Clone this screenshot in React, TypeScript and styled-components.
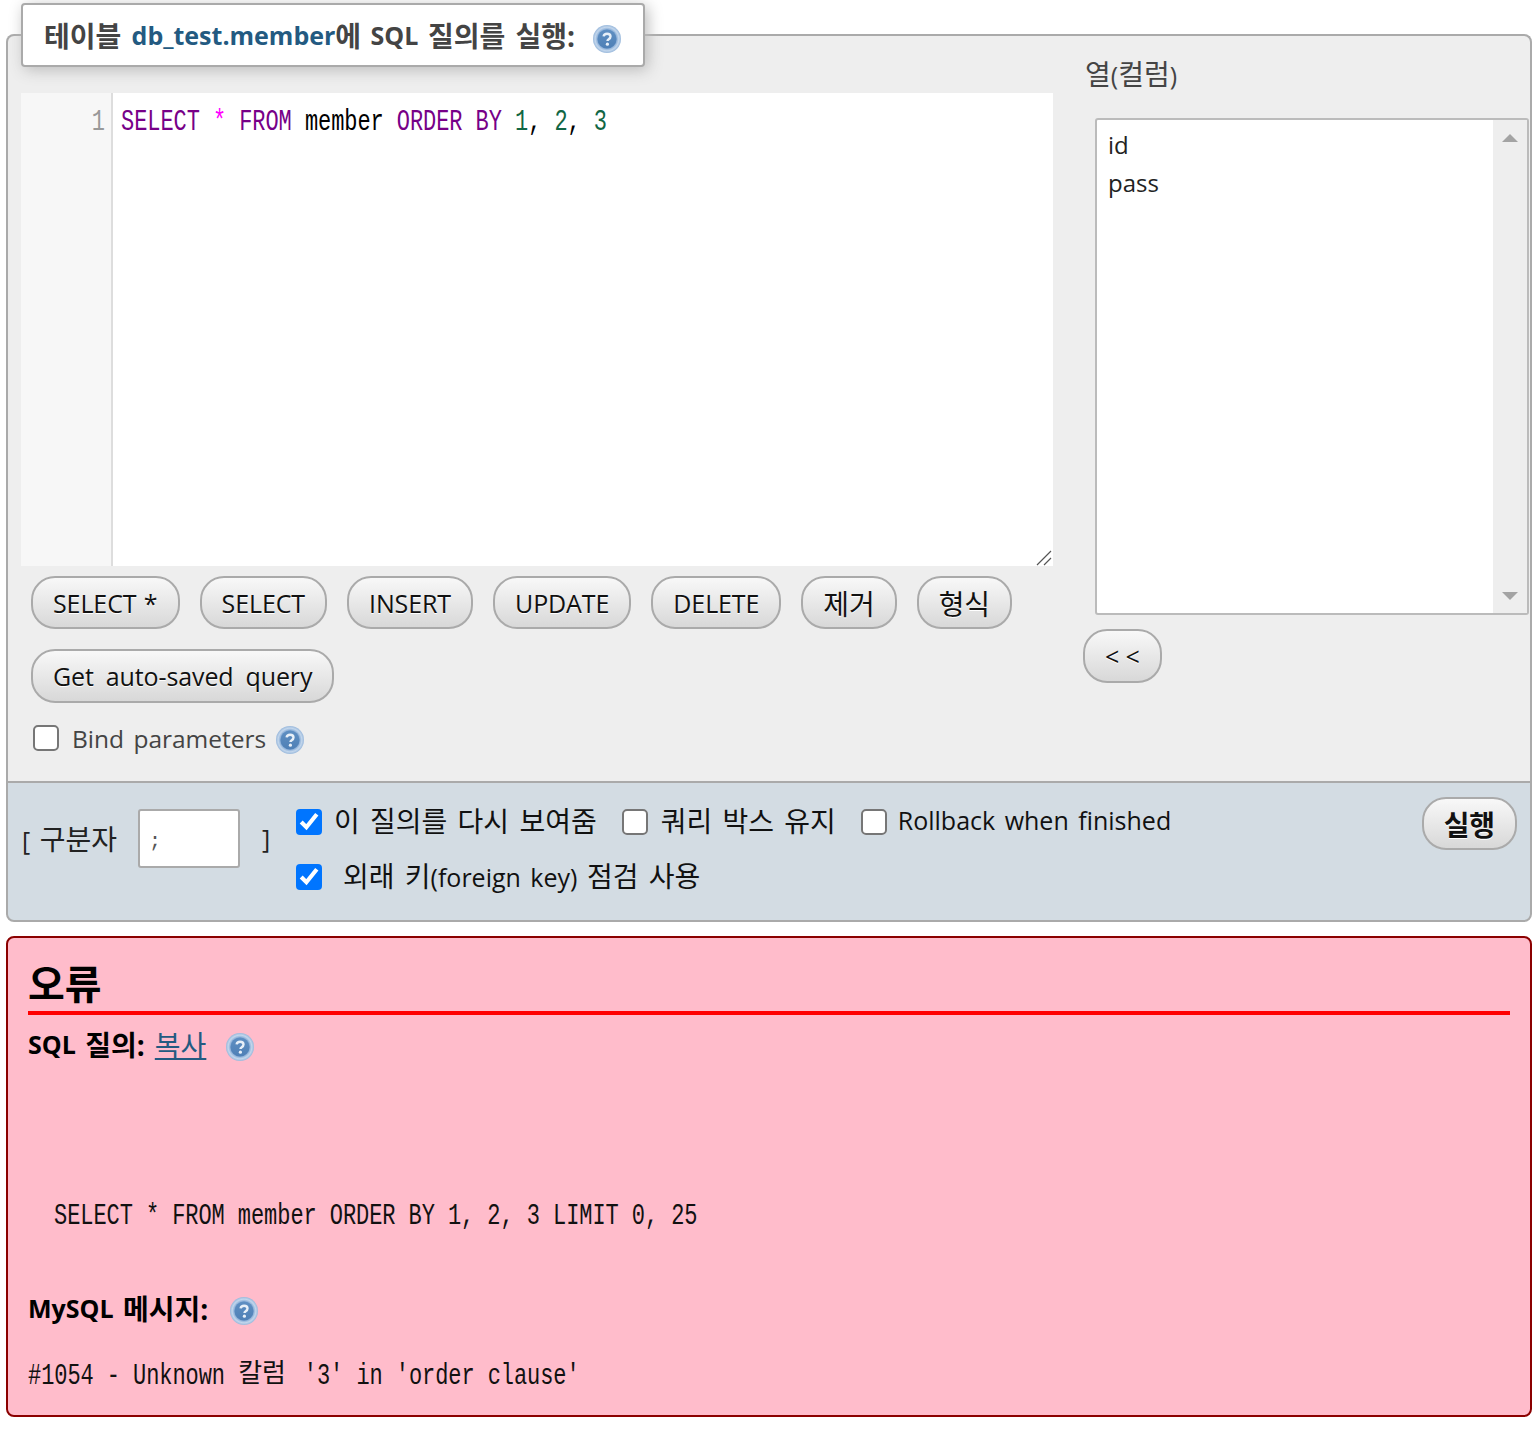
import React from "react";
import styled, { createGlobalStyle } from "styled-components";

const sans = `"Open Sans", "Noto Sans CJK KR", sans-serif`;
const mono = `"Liberation Mono", "Noto Sans CJK KR", monospace`;

const GlobalStyle = createGlobalStyle`
  html, body {
    margin: 0;
    padding: 0;
    background: #fff;
  }
  body {
    font-family: ${sans};
    font-size: 25px;
    word-spacing: 3px;
    color: #444;
  }
`;

// hangul runs sit a little larger than the latin text around them
const Ko = styled.span`
  font-size: 28px;
  word-spacing: 3px;
`;

const Page = styled.div`
  width: 1536px;
  height: 1438px;
  box-sizing: border-box;
  padding: 3px 4px 0 6px;
  overflow: hidden;
`;

const QueryFieldset = styled.fieldset`
  margin: 0;
  padding: 0 1px 0 13px;
  height: 778px;
  box-sizing: border-box;
  min-width: 0;
  background: #eee;
  border: 2px solid #aaa;
  border-bottom: 0;
  border-radius: 8px 8px 0 0;
`;

const Legend = styled.legend`
  box-sizing: border-box;
  width: 624px;
  height: 64px;
  padding: 0 0 0 21px;
  display: flex;
  align-items: center;
  background: #fff;
  border: 2px solid #aaa;
  border-radius: 4px;
  box-shadow: 3px 3px 15px #bbb;
  font-weight: 700;
  color: #444;
  white-space: pre;
`;

const TableName = styled.span`
  color: #235a81;
`;

const LegendHelp = styled.span`
  margin: 7px 0 0 18px;
  display: flex;
`;

const Columns = styled.div`
  display: flex;
  gap: 30px;
`;

const LeftColumn = styled.div`
  width: 1032px;
  flex: none;
  padding-top: 26px;
`;

const Editor = styled.div`
  position: relative;
  height: 473px;
  display: flex;
  background: #fff;
`;

const Gutter = styled.div`
  width: 92px;
  flex: none;
  box-sizing: border-box;
  padding: 15px 6px 0 0;
  text-align: right;
  background: #f7f7f7;
  border-right: 2px solid #ddd;
  color: #999;
  font-family: ${mono};
  font-size: 22px;
  line-height: 30px;
  word-spacing: 0;
`;

const CodeLine = styled.div`
  padding: 15px 0 0 8px;
  font-family: ${mono};
  font-size: 22px;
  line-height: 30px;
  letter-spacing: -0.07px;
  word-spacing: 0;
  color: #000;
  white-space: pre;
`;

const Tall = styled.span`
  display: inline-block;
  transform: scaleY(1.3);
`;

const TallKo = styled.span`
  display: inline-block;
  width: 52.6px;
  font-size: 26px;
  line-height: 30px;
  transform: scaleY(0.77);
`;

const Keyword = styled.span`
  color: #708;
`;

const Star = styled.span`
  color: #f0f;
`;

const Num = styled.span`
  color: #164;
`;

const ResizeHandle = styled.svg`
  position: absolute;
  right: 0;
  bottom: 0;
`;

const ButtonRow = styled.div<{ $top: number }>`
  display: flex;
  gap: 20px;
  padding: ${(p) => p.$top}px 0 0 10px;
`;

const Button = styled.button<{ $wide?: boolean; $bold?: boolean; $spacing?: number }>`
  box-sizing: border-box;
  height: ${(p) => (p.$wide ? 54 : 53)}px;
  padding: 0 20px;
  font-family: ${sans};
  font-size: 25px;
  letter-spacing: -0.1px;
  word-spacing: ${(p) => p.$spacing ?? 3}px;
  font-weight: ${(p) => (p.$bold ? 700 : 400)};
  color: #111;
  background: linear-gradient(#f8f8f8, #d8d8d8);
  border: 2px solid #aaa;
  border-radius: 24px;
  text-shadow: 0 1px 0 #fff;
  white-space: pre;
`;

const BindRow = styled.div`
  display: flex;
  align-items: center;
  padding: 21px 0 0 12px;
  height: 28px;
`;

const Box = styled.input.attrs({ type: "checkbox" })`
  zoom: 2;
  margin: 0;
  flex: none;
`;

const BindLabel = styled.span`
  margin: 0 10px 0 13px;
  font-size: 24.5px;
  color: #444;
`;

const BindHelp = styled.span`
  margin-top: 4px;
  display: flex;
`;

const RightColumn = styled.div`
  flex: 1;
  margin-top: -11px;
  min-width: 0;
`;

const ColumnLabel = styled.div`
  height: 36px;
  line-height: 36px;
  padding-left: 2px;
  color: #444;
`;

const ColumnList = styled.div`
  box-sizing: border-box;
  height: 497px;
  margin: 26px 0 14px 12px;
  display: flex;
  background: #fff;
  border: 2px solid #bbb;
  border-radius: 3px;
`;

const ColumnItems = styled.div`
  flex: 1;
  padding: 6px 11px;
  color: #222;
  font-size: 24px;
  line-height: 38px;
`;

const ScrollTrack = styled.div`
  width: 34px;
  flex: none;
  box-sizing: border-box;
  padding: 14px 0 13px;
  display: flex;
  flex-direction: column;
  justify-content: space-between;
  align-items: center;
  background: #eee;
`;

const Arrow = styled.div<{ $down?: boolean }>`
  width: 0;
  height: 0;
  border-left: 8px solid transparent;
  border-right: 8px solid transparent;
  ${(p) => (p.$down ? "border-top: 8px solid #a3a3a3;" : "border-bottom: 8px solid #a3a3a3;")}
`;

const FooterBar = styled.div`
  box-sizing: border-box;
  height: 141px;
  display: flex;
  background: #d3dce3;
  border: 2px solid #aaa;
  border-radius: 0 0 8px 8px;
  padding: 14px 13px 0 14px;
`;

const Delimiter = styled.div`
  display: flex;
  align-items: center;
  height: 60px;
  width: 274px;
  margin-top: 11px;
  flex: none;
  color: #222;
  white-space: pre;
`;

const DelimiterInput = styled.div`
  box-sizing: border-box;
  width: 102px;
  height: 59px;
  margin: 0 22px 0 21px;
  padding: 19px 9px 0;
  background: #fff;
  border: 2px solid #aaa;
  border-radius: 3px;
  font-family: ${mono};
  font-size: 20px;
  color: #555;
`;

const Options = styled.div`
  flex: 1;
  display: flex;
  flex-direction: column;
  gap: 25px;
  padding-top: 8px;
`;

const OptionRow = styled.div`
  display: flex;
  align-items: center;
  height: 30px;
`;

const Option = styled.label<{ $gap?: number }>`
  display: flex;
  align-items: center;
  margin-right: 25px;
  color: #111;
  white-space: pre;
  > input {
    margin-top: 2px;
  }
  > span {
    margin-left: ${(p) => p.$gap ?? 13}px;
  }
`;

const ErrorBox = styled.div`
  box-sizing: border-box;
  height: 481px;
  margin-top: 14px;
  padding: 0 20px;
  background: #ffbccb;
  border: 2px solid #8b0000;
  border-radius: 8px;
  color: #000;
`;

const ErrorTitle = styled.h1`
  margin: 0;
  height: 77px;
  box-sizing: border-box;
  padding-top: 18px;
  border-bottom: 4px solid #f00;
  font-size: 40px;
  line-height: 56px;
  font-weight: 700;
`;

const SubHeading = styled.div<{ $top: number }>`
  display: flex;
  align-items: center;
  height: 38px;
  margin-top: ${(p) => p.$top}px;
  font-weight: 700;
  white-space: pre;
`;

const CopyLink = styled.a`
  margin-left: 10px;
  font-weight: 400;
  color: #235a81;
  text-decoration: underline;
`;

const HeadingHelp = styled.span<{ $left: number }>`
  margin: 6px 0 0 ${(p) => p.$left}px;
  display: flex;
`;

const ErrorCode = styled.div<{ $top: number; $left: number }>`
  margin-top: ${(p) => p.$top}px;
  padding-left: ${(p) => p.$left}px;
  font-family: ${mono};
  font-size: 22px;
  line-height: 30px;
  letter-spacing: -0.07px;
  word-spacing: 0;
  color: #111;
  white-space: pre;
`;

const HelpIcon = ({ size = 28 }: { size?: number }) => (
  <svg width={size} height={size} viewBox="0 0 28 28">
    <defs>
      <radialGradient id="helpRing" cx="50%" cy="50%" r="50%">
        <stop offset="66%" stopColor="#7fa6d3" />
        <stop offset="84%" stopColor="#c2d6ec" />
        <stop offset="100%" stopColor="#9ab9dc" />
      </radialGradient>
      <linearGradient id="helpCore" x1="0" y1="0" x2="0" y2="1">
        <stop offset="0%" stopColor="#5f8fc2" />
        <stop offset="100%" stopColor="#4f80b6" />
      </linearGradient>
    </defs>
    <circle cx="14" cy="14" r="14" fill="url(#helpRing)" />
    <circle cx="14" cy="14" r="9.5" fill="url(#helpCore)" />
    <path
      d="M10.6 11.4c.3-1.8 1.6-2.7 3.5-2.7 2 0 3.4 1.1 3.4 2.8 0 1.3-.7 2-1.8 2.7-.9.6-1.2 1-1.2 1.9"
      fill="none"
      stroke="#e8f0f8"
      strokeWidth="2.4"
    />
    <circle cx="14.4" cy="19.2" r="1.6" fill="#e8f0f8" />
  </svg>
);

const App = () => (
  <Page>
    <GlobalStyle />
    <QueryFieldset>
      <Legend>
        <Ko>테이블 </Ko>
        <TableName>db_test.member</TableName>
        <Ko>에</Ko> SQL <Ko>질의를 실행:</Ko>
        <LegendHelp>
          <HelpIcon />
        </LegendHelp>
      </Legend>
      <Columns>
        <LeftColumn>
          <Editor>
            <Gutter>
              <Tall>1</Tall>
            </Gutter>
            <CodeLine>
              <Tall>
                <Keyword>SELECT</Keyword> <Star>*</Star> <Keyword>FROM</Keyword> member{" "}
                <Keyword>ORDER BY</Keyword> <Num>1</Num>, <Num>2</Num>, <Num>3</Num>
              </Tall>
            </CodeLine>
            <ResizeHandle width="18" height="18" viewBox="0 0 18 18">
              <path d="M2 17L16 3M9 17L16 10" stroke="#555" strokeWidth="1.2" />
            </ResizeHandle>
          </Editor>
          <ButtonRow $top={10}>
            <Button $spacing={1}>SELECT *</Button>
            <Button>SELECT</Button>
            <Button>INSERT</Button>
            <Button>UPDATE</Button>
            <Button>DELETE</Button>
            <Button>
              <Ko>제거</Ko>
            </Button>
            <Button>
              <Ko>형식</Ko>
            </Button>
          </ButtonRow>
          <ButtonRow $top={20}>
            <Button $wide $spacing={5.5}>
              Get auto-saved query
            </Button>
          </ButtonRow>
          <BindRow>
            <Box />
            <BindLabel>Bind parameters</BindLabel>
            <BindHelp>
              <HelpIcon />
            </BindHelp>
          </BindRow>
        </LeftColumn>
        <RightColumn>
          <ColumnLabel>
            <Ko>열</Ko>(<Ko>컬럼</Ko>)
          </ColumnLabel>
          <ColumnList>
            <ColumnItems>
              id
              <br />
              pass
            </ColumnItems>
            <ScrollTrack>
              <Arrow />
              <Arrow $down />
            </ScrollTrack>
          </ColumnList>
          <Button $wide $spacing={0}>
            {"< <"}
          </Button>
        </RightColumn>
      </Columns>
    </QueryFieldset>
    <FooterBar>
      <Delimiter>
        <span>
          [ <Ko>구분자</Ko>
        </span>
        <DelimiterInput>;</DelimiterInput>]
      </Delimiter>
      <Options>
        <OptionRow>
          <Option $gap={12}>
            <Box defaultChecked />
            <span>
              <Ko>이 질의를 다시 보여줌</Ko>
            </span>
          </Option>
          <Option>
            <Box />
            <span>
              <Ko>쿼리 박스 유지</Ko>
            </span>
          </Option>
          <Option $gap={11}>
            <Box />
            <span>Rollback when finished</span>
          </Option>
        </OptionRow>
        <OptionRow>
          <Option $gap={21}>
            <Box defaultChecked />
            <span>
              <Ko>외래 키</Ko>(foreign key) <Ko>점검 사용</Ko>
            </span>
          </Option>
        </OptionRow>
      </Options>
      <Button $bold>
        <Ko>실행</Ko>
      </Button>
    </FooterBar>
    <ErrorBox>
      <ErrorTitle>오류</ErrorTitle>
      <SubHeading $top={10}>
        SQL <Ko>질의:</Ko>
        <CopyLink>
          <Ko>복사</Ko>
        </CopyLink>
        <HeadingHelp $left={20}>
          <HelpIcon />
        </HeadingHelp>
      </SubHeading>
      <ErrorCode $top={139} $left={26}>
        <Tall>SELECT * FROM member ORDER BY 1, 2, 3 LIMIT 0, 25</Tall>
      </ErrorCode>
      <SubHeading $top={57}>
        MySQL <Ko>메시지:</Ko>
        <HeadingHelp $left={22}>
          <HelpIcon />
        </HeadingHelp>
      </SubHeading>
      <ErrorCode $top={33} $left={0}>
        <Tall>
          #1054 - Unknown <TallKo>칼럼</TallKo> '3' in 'order clause'
        </Tall>
      </ErrorCode>
    </ErrorBox>
  </Page>
);

export default App;
